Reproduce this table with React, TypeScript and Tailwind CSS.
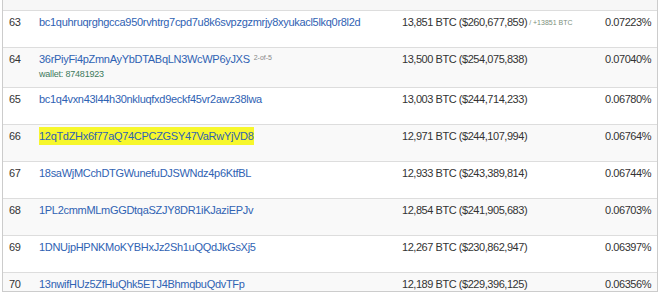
import * as React from 'react';

type Row = {
  rank: number;
  address: string;
  balance: string;
  pct: string;
  multisig?: string;
  wallet?: string;
  change?: string;
  highlight?: boolean;
};

const rows: Row[] = [
  { rank: 63, address: 'bc1quhruqrghgcca950rvhtrg7cpd7u8k6svpzgzmrjy8xyukacl5lkq0r8l2d', balance: '13,851 BTC ($260,677,859)', change: '/ +13851 BTC', pct: '0.07223%' },
  { rank: 64, address: '36rPiyFi4pZmnAyYbDTABqLN3WcWP6yJXS', multisig: '2-of-5', wallet: 'wallet: 87481923', balance: '13,500 BTC ($254,075,838)', pct: '0.07040%' },
  { rank: 65, address: 'bc1q4vxn43l44h30nkluqfxd9eckf45vr2awz38lwa', balance: '13,003 BTC ($244,714,233)', pct: '0.06780%' },
  { rank: 66, address: '12qTdZHx6f77aQ74CPCZGSY47VaRwYjVD8', balance: '12,971 BTC ($244,107,994)', pct: '0.06764%', highlight: true },
  { rank: 67, address: '18saWjMCchDTGWunefuDJSWNdz4p6KtfBL', balance: '12,933 BTC ($243,389,814)', pct: '0.06744%' },
  { rank: 68, address: '1PL2cmmMLmGGDtqaSZJY8DR1iKJaziEPJv', balance: '12,854 BTC ($241,905,683)', pct: '0.06703%' },
  { rank: 69, address: '1DNUjpHPNKMoKYBHxJz2Sh1uQQdJkGsXj5', balance: '12,267 BTC ($230,862,947)', pct: '0.06397%' },
  { rank: 70, address: '13nwifHUz5ZfHuQhk5ETJ4BhmqbuQdvTFp', balance: '12,189 BTC ($229,396,125)', pct: '0.06356%' },
];

function RichRow({ row }: { row: Row }) {
  const striped = row.rank % 2 === 0;
  return (
    <div
      className={
        'grid grid-cols-[31px_362px_1fr_auto] border-b border-[#dddddd] ' +
        (striped ? 'bg-[#f9f9f9] ' : 'bg-white ') +
        (row.wallet ? 'h-[40px]' : 'h-[37px]')
      }
    >
      <div className="pl-[6px] pt-[2px] leading-[18px]">{row.rank}</div>
      <div className="pl-[5px] pt-[2px] leading-[18px]">
        <div className="flex items-start">
          <span className={'tracking-[-0.3px] text-[#2f62b3] ' + (row.highlight ? 'bg-[#f7f72c]' : '')}>
            {row.address}
          </span>
          {row.multisig && (
            <span className="ml-[4px] text-[7px] leading-[10px] mt-[3px] tracking-normal text-[#888888]">{row.multisig}</span>
          )}
        </div>
        {row.wallet && (
          <div className="text-[9px] leading-[12px] tracking-[-0.2px] text-[#3d7a5c]">{row.wallet}</div>
        )}
      </div>
      <div className="pl-[6px] pt-[2px] leading-[18px] flex items-start">
        <span>{row.balance}</span>
        {row.change && (
          <span className="ml-[2px] mt-[5px] text-[7px] leading-[10px] tracking-normal text-[#7d8f7d]">{row.change}</span>
        )}
      </div>
      <div className="pr-[6px] pt-[2px] leading-[18px] text-right">{row.pct}</div>
    </div>
  );
}

export default function App() {
  return (
    <div
      className="w-[660px] h-[296px] bg-white overflow-hidden text-[11px] tracking-[-0.45px] text-[#333333]"
      style={{ fontFamily: '"Liberation Sans", Arial, sans-serif' }}
    >
      <div className="ml-[2px] w-[656px] h-[292px] overflow-hidden border-x border-b border-[#cccccc]">
        {/* tail of the previous (striped) row */}
        <div className="h-[11px] bg-[#f7f7f7] border-b border-[#dddddd]" />
        {rows.map((r) => (
          <RichRow key={r.rank} row={r} />
        ))}
      </div>
    </div>
  );
}
